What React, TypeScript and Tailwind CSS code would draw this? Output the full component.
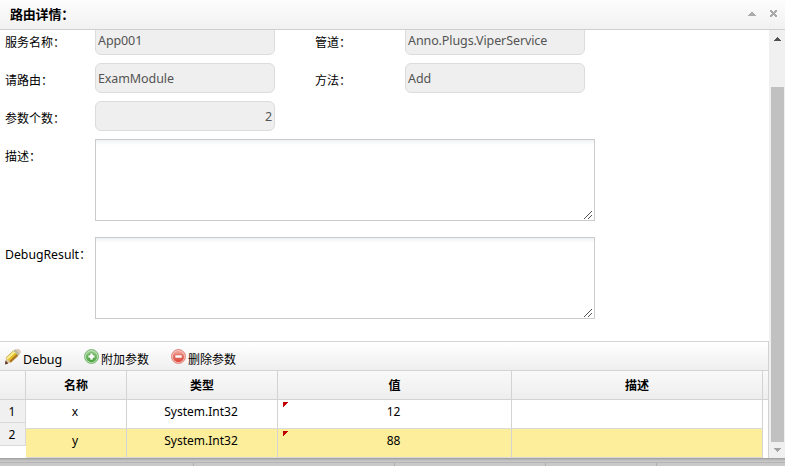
import React from 'react';

const BODY_FONT = "font-['Noto_Sans','Noto_Sans_CJK_SC',sans-serif]";

function Label({ text, className = 'text-[12px]' }: { text: string; className?: string }) {
  return (
    <div className={`h-[30px] shrink-0 whitespace-nowrap pl-[5px] pt-[4px] leading-[28px] text-black ${className}`}>
      {text}
    </div>
  );
}

function Field({ value, align = 'text-left' }: { value: string; align?: string }) {
  return (
    <div className={`h-[30px] w-[180px] shrink-0 rounded-[6px] border border-[#dcdcdc] bg-[#efefef] px-[2px] text-[12.5px] leading-[29px] tracking-[-0.1px] text-[#545454] ${align}`}>
      {value}
    </div>
  );
}

function Area() {
  return (
    <div className="flex h-[82px] w-[500px] items-end justify-end border border-[#cbcbcb] bg-gradient-to-b from-[#eef1f3] to-white to-[5px]">
      <svg width="11" height="11" viewBox="0 0 11 11" shapeRendering="crispEdges" fill="#555">
        {[0, 1, 2, 3, 4, 5, 6, 7].map((i) => (
          <rect key={i} x={1 + i} y={9 - i} width="1" height="1" />
        ))}
        {[0, 1, 2, 3].map((i) => (
          <rect key={i} x={5 + i} y={9 - i} width="1" height="1" />
        ))}
      </svg>
    </div>
  );
}

function Pencil() {
  return (
    <svg width="16" height="16" viewBox="0 0 16 16">
      <path d="M0.2 14.8 L1 8.6 L6 13.2 Z" fill="#dcc3a0" />
      <path d="M0 15.4 L0.5 11.6 L3.4 14.4 Z" fill="#5d3428" />
      <path d="M1 8.8 L8.4 1.8 L13.2 6.4 L5.8 13.4 Z" fill="#e8bf2c" />
      <path d="M1 8.8 L8.4 1.8 L10.2 3.5 L2.8 10.5 Z" fill="#fbee8c" />
      <path d="M4.3 12 L11.7 5 L13.2 6.4 L5.8 13.4 Z" fill="#ad7622" />
      <path d="M8.4 1.8 L10.2 0.2 L15 4.8 L13.2 6.4 Z" fill="#b5b79f" />
      <path d="M10.2 0.4 Q15.6 -1 15.7 3.2 L14.8 5 Z" fill="#ddc7b2" />
      <path d="M1 8.8 L8.4 1.8 M5.8 13.4 L13.2 6.4" stroke="#a9853c" strokeWidth=".6" />
    </svg>
  );
}

function RoundIcon({ kind }: { kind: 'add' | 'remove' }) {
  const add = kind === 'add';
  return (
    <svg width="16" height="16" viewBox="0 0 16 16">
      <defs>
        <linearGradient id={kind} x1="0" y1="0" x2="0" y2="1">
          <stop offset="0" stopColor={add ? '#a4d59a' : '#f5aaa0'} />
          <stop offset="1" stopColor={add ? '#48a33c' : '#dc4034'} />
        </linearGradient>
      </defs>
      <circle cx="7.5" cy="7.5" r="6.9" fill={add ? '#d4ebd0' : '#fad8d4'} stroke={add ? '#5aa552' : '#d9655c'} strokeWidth=".9" />
      <circle cx="7.5" cy="7.5" r="5.7" fill={`url(#${kind})`} />
      {add ? (
        <path d="M6 4h3v2h2v3h-2v2h-3V9h-2V6h2z" fill="#fff" stroke="#439638" strokeWidth=".6" />
      ) : (
        <rect x="4" y="6" width="7" height="3" fill="#fff" stroke="#cc4b42" strokeWidth=".5" />
      )}
    </svg>
  );
}

const COLS = ['w-[101px]', 'w-[151px]', 'w-[234px]', 'w-[251px]'];
const HEADS = ['名称', '类型', '值', '描述'];
const ROWS = [
  ['x', 'System.Int32', '12', ''],
  ['y', 'System.Int32', '88', ''],
];

function Grid() {
  return (
    <div className="h-[117px] w-[769px] border-r border-t border-[#d3d3d3] bg-white">
      <div className="flex h-[29px] items-start border-b border-[#d3d3d3] bg-gradient-to-b from-white to-[#efefef] text-[12px] leading-[18px] text-black">
        <div className="flex w-[79px] pl-[5px] pt-[7px]">
          <Pencil />
          <span className="ml-[2px] mt-[2px] text-[12.5px]">Debug</span>
        </div>
        <div className="flex w-[87px] pl-[5px] pt-[7px]">
          <RoundIcon kind="add" />
          <span className="mt-[2px] whitespace-nowrap pl-px">附加参数</span>
        </div>
        <div className="flex pl-[5px] pt-[7px]">
          <RoundIcon kind="remove" />
          <span className="mt-[2px] whitespace-nowrap pl-px">删除参数</span>
        </div>
      </div>
      <div className="flex h-[29px] border-b border-[#d3d3d3] bg-gradient-to-b from-[#f9f9f9] to-[#eeeeee]">
        <div className="w-[26px] border-r border-[#d3d3d3]" />
        {HEADS.map((h, i) => (
          <div key={h} className={`${COLS[i]} border-r border-[#d3d3d3] text-center text-[12px] font-bold leading-[29px] text-black`}>
            {h}
          </div>
        ))}
      </div>
      <div className="flex">
        <div className="w-[26px] text-center text-[12px] leading-[24px] text-black">
          <div className="h-[23px] border-b border-r border-[#d9d9d9] bg-[#f0f0f0] pr-px">1</div>
          <div className="h-[23px] border-b border-r border-[#d9d9d9] bg-[#f0f0f0] pr-px">2</div>
        </div>
        <div>
          {ROWS.map((row, r) => (
            <div key={r} className={`flex h-[29px] border-b border-[#d9d9d9] ${r === 1 ? 'bg-[#fcee9b]' : 'bg-white'}`}>
              {row.map((c, i) => (
                <div key={i} className={`${COLS[i]} relative border-r border-[#d3d3d3] pr-[2px] text-center text-[12px] leading-[24px] text-black`}>
                  {i === 2 && (
                    <svg className="absolute left-[5px] top-[2px]" width="5" height="5" viewBox="0 0 5 5" shapeRendering="crispEdges">
                      <path d="M0 0H5V1H4V2H3V3H2V4H1V5H0Z" fill="#c00000" />
                    </svg>
                  )}
                  {c}
                </div>
              ))}
            </div>
          ))}
        </div>
      </div>
    </div>
  );
}

function Scrollbar() {
  return (
    <div className="flex w-[16px] flex-col items-start bg-[#f0f0f0] pl-[2px]">
      <svg className="ml-[3px] mt-[7px]" width="7" height="4" viewBox="0 0 7 4" shapeRendering="crispEdges">
        <path d="M3 0H4V1H5V2H6V3H7V4H0V3H1V2H2V1H3Z" fill="#505050" />
      </svg>
      <div className="mt-[46px] h-[355px] w-[13px] bg-[#c1c1c1]" />
      <svg className="ml-[3px] mt-[6px]" width="7" height="4" viewBox="0 0 7 4" shapeRendering="crispEdges">
        <path d="M0 0H7V1H6V2H5V3H4V4H3V3H2V2H1V1H0Z" fill="#a3a3a3" />
      </svg>
    </div>
  );
}

export default function App() {
  return (
    <div className={`h-[466px] w-[785px] overflow-hidden bg-white ${BODY_FONT}`}>
      <div className="flex h-[30px] items-start justify-between border-b border-[#cfcfcf] bg-gradient-to-b from-[#fdfdfd] to-[#f1f1f1]">
        <div className="pl-[10px] text-[13px] font-bold leading-[29px] tracking-[-0.2px] text-black">路由详情：</div>
        <div className="flex pr-[8px] pt-[10px]">
          <svg className="mr-[14px] mt-[2px]" width="8" height="4" viewBox="0 0 8 4" shapeRendering="crispEdges">
            <path d="M3 0H5V1H6V2H7V3H8V4H0V3H1V2H2V1H3Z" fill="#aaa" />
          </svg>
          <svg width="7" height="7" viewBox="0 0 7 7" shapeRendering="crispEdges">
            <path d="M0 0H2V1H3V2H4V1H5V0H7V2H6V3H5V4H6V5H7V7H5V6H4V5H3V6H2V7H0V5H1V4H2V3H1V2H0Z" fill="#aaa" />
          </svg>
        </div>
      </div>
      <div className="flex h-[428px]">
        <div className="w-[769px] overflow-hidden">
          <div className="-mt-[5px] grid grid-cols-[95px_215px_95px_180px] gap-y-[8px]">
            <Label text="服务名称：" />
            <Field value="App001" />
            <Label text="管道：" />
            <Field value="Anno.Plugs.ViperService" />
            <Label text="请路由：" />
            <Field value="ExamModule" />
            <Label text="方法：" />
            <Field value="Add" />
            <Label text="参数个数：" />
            <div className="col-span-3">
              <Field value="2" align="text-right" />
            </div>
            <Label text="描述：" />
            <div className="col-span-3 mb-[8px]">
              <Area />
            </div>
            <Label text="DebugResult：" className="text-[12.25px]" />
            <div className="col-span-3">
              <Area />
            </div>
          </div>
          <div className="mt-[22px]">
            <Grid />
          </div>
        </div>
        <Scrollbar />
      </div>
      <div className="flex h-[8px] flex-col bg-[#c9c9c9]">
        <div className="h-px bg-[#a4a4a4]" />
        <div className="h-px bg-[#b5b5b5]" />
        <div className="h-px bg-[#c0c0c0]" />
        <div className="h-px" />
        <div className="h-px bg-[#b3b3b3]" />
        <div className="flex h-[3px]">
          <div className="w-[194px] border-r border-[#b0b0b0]" />
          <div className="w-[201px] border-r border-[#b0b0b0]" />
          <div className="w-[151px] border-r border-[#b0b0b0]" />
          <div className="w-[111px] border-r border-[#b0b0b0]" />
        </div>
      </div>
    </div>
  );
}
